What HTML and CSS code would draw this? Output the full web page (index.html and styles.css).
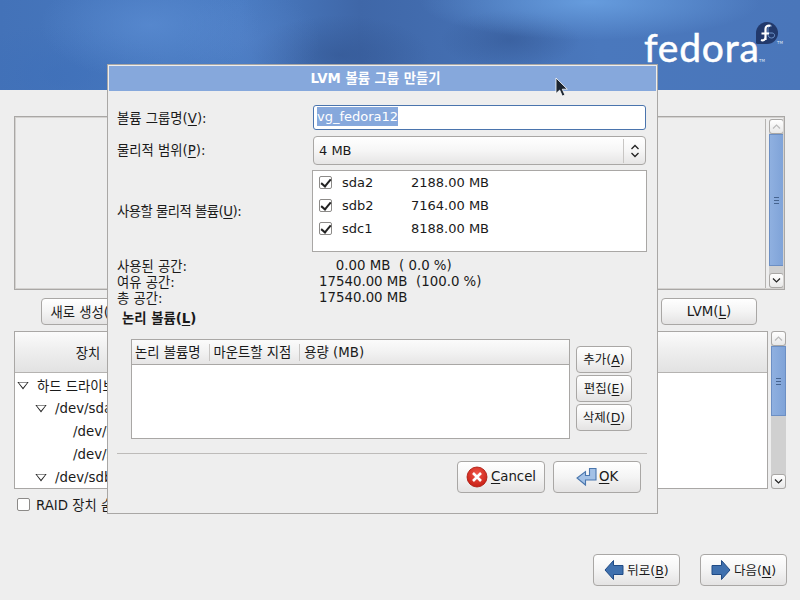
FILE: index.html
```html
<!DOCTYPE html>
<html lang="ko">
<head>
<meta charset="utf-8">
<title>LVM 볼륨 그룹 만들기</title>
<link rel="stylesheet" href="styles.css">
</head>
<body>
<div class="screen">
  <header class="banner">
    <div class="logo">
      <span class="logo-word">fedora</span><span class="tm tm-word">TM</span>
      <svg class="logo-mark" width="24" height="24" viewBox="0 0 24 24">
        <path d="M12 1a11 11 0 0 1 0 22H2.500A1.500 1.500 0 0 1 1 21.500V12A11 11 0 0 1 12 1z" fill="#22396b"/>
        <path d="M11 12H17c3.500 0 3.500 5-.5 5-2 0-3.500-1.500-3.500-3.500M13 12V7.500c0-2 2-3 4-2.500" fill="none" stroke="#6f95cc" stroke-width="1"/>
        <path d="M6.500 12.500H14M10.500 19V8c0-2.500 2-4 5-3.200M10.500 16c0 2.500-2 4-4.500 3" fill="none" stroke="#fff" stroke-width="2.200"/>
      </svg>
      <span class="tm tm-mark">TM</span>
    </div>
  </header>

  <main class="main">
    <div class="top-frame">
      <div class="top-list"></div>
      <div class="scrollbar">
        <div class="sb-btn"><svg width="9" height="5" viewBox="0 0 9 5"><path d="M1 4.500l3.500-3.500 3.500 3.500" fill="none" stroke="#bbb" stroke-width="1.200"/></svg></div>
        <div class="sb-thumb top-thumb"><span class="grip"></span></div>
        <div class="sb-track"></div>
        <div class="sb-btn"><svg width="9" height="5" viewBox="0 0 9 5"><path d="M1 .5l3.500 3.500 3.500-3.500" fill="none" stroke="#222" stroke-width="1.200"/></svg></div>
      </div>
    </div>

    <div class="actions">
      <button class="btn act-btn">새로 생성(W)</button>
      <button class="btn act-btn"><span>LVM(<u>L</u>)</span></button>
    </div>

    <div class="tree-row">
      <div class="tree">
        <div class="tree-head"><span class="tree-col">장치</span></div>
        <div class="tree-body">
          <div class="node lvl0"><i class="exp"></i>하드 드라이브</div>
          <div class="node lvl1"><i class="exp"></i>/dev/sda</div>
          <div class="node lvl2">/dev/sda1</div>
          <div class="node lvl2">/dev/sda2</div>
          <div class="node lvl1"><i class="exp"></i>/dev/sdb</div>
        </div>
      </div>
      <div class="scrollbar">
        <div class="sb-btn"><svg width="9" height="5" viewBox="0 0 9 5"><path d="M1 4.500l3.500-3.500 3.500 3.500" fill="none" stroke="#bbb" stroke-width="1.200"/></svg></div>
        <div class="sb-thumb tree-thumb"><span class="grip"></span></div>
        <div class="sb-track"></div>
        <div class="sb-btn"><svg width="9" height="5" viewBox="0 0 9 5"><path d="M1 .5l3.500 3.500 3.500-3.500" fill="none" stroke="#222" stroke-width="1.200"/></svg></div>
      </div>
    </div>

    <label class="raid"><i class="check"></i>RAID 장치 숨기기(A)</label>

    <div class="nav">
      <button class="btn nav-btn">
        <svg width="20" height="22" viewBox="0 0 20 22"><path d="M9.500 1.500L1 11l8.500 9.500V15.500H19v-9H9.500z" fill="#3f70ae" stroke="#1f4a85"/></svg>
        <span>뒤로(<u>B</u>)</span>
      </button>
      <button class="btn nav-btn">
        <svg width="20" height="22" viewBox="0 0 20 22"><path d="M10.500 1.500L19 11l-8.500 9.500V15.500H1v-9h9.500z" fill="#3f70ae" stroke="#1f4a85"/></svg>
        <span>다음(<u>N</u>)</span>
      </button>
    </div>
  </main>

  <section class="dialog">
    <div class="dlg-title">LVM 볼륨 그룹 만들기</div>
    <div class="dlg-body">
      <div class="form">
        <span class="lbl">볼륨 그룹명(<u>V</u>):</span>
        <div class="input"><span class="sel">vg_fedora12</span></div>
        <span class="lbl">물리적 범위(<u>P</u>):</span>
        <div class="combo">
          <span class="combo-val">4 MB</span>
          <span class="combo-arrows">
            <svg width="10" height="14" viewBox="0 0 10 14"><path d="M1.500 5L5 1.500 8.500 5M1.500 9L5 12.500 8.500 9" fill="none" stroke="#222" stroke-width="1.300"/></svg>
          </span>
        </div>
        <span class="lbl lbl-tight">사용할 물리적 볼륨(<u>U</u>):</span>
        <div class="pv-list">
          <div class="pv"><i class="check checked"></i><span class="pv-name">sda2</span><span>2188.00 MB</span></div>
          <div class="pv"><i class="check checked"></i><span class="pv-name">sdb2</span><span>7164.00 MB</span></div>
          <div class="pv"><i class="check checked"></i><span class="pv-name">sdc1</span><span>8188.00 MB</span></div>
        </div>
      </div>

      <div class="info">
        <span class="lbl">사용된 공간:</span><div><span class="num">0.00 MB</span><span class="pct-a">( 0.0 %)</span></div>
        <span class="lbl">여유 공간:</span><div><span class="num">17540.00 MB</span><span class="pct-b">(100.0 %)</span></div>
        <span class="lbl">총 공간:</span><div><span class="num">17540.00 MB</span></div>
      </div>

      <div class="lv-title">논리 볼륨(<u>L</u>)</div>

      <div class="lv-row">
        <div class="lv-table">
          <div class="lv-head">
            <span class="lv-col">논리 볼륨명</span>
            <span class="lv-col">마운트할 지점</span>
            <span class="lv-col">용량 (MB)</span>
          </div>
        </div>
        <div class="lv-btns">
          <button class="btn lv-btn"><span>추가(<u>A</u>)</span></button>
          <button class="btn lv-btn"><span>편집(<u>E</u>)</span></button>
          <button class="btn lv-btn"><span>삭제(<u>D</u>)</span></button>
        </div>
      </div>

      <div class="sep"></div>

      <div class="dlg-actions">
        <button class="btn dlg-btn">
          <svg width="22" height="22" viewBox="0 0 22 22"><defs><radialGradient id="red" cx=".5" cy=".35" r=".7"><stop offset="0" stop-color="#f0574a"/><stop offset="1" stop-color="#c41a10"/></radialGradient></defs><circle cx="11" cy="11" r="10" fill="url(#red)" stroke="#a81409" stroke-width=".8"/><path d="M7 7l8 8M15 7l-8 8" stroke="#fff" stroke-width="2.600"/></svg>
          <span><u>C</u>ancel</span>
        </button>
        <button class="btn dlg-btn ok-btn">
          <svg width="22" height="22" viewBox="0 0 22 22"><path d="M13.500 2.500h6.500v11.500H9.500V19L1 12 9.500 5.500v4h4z" fill="#a3c1e6" stroke="#4a76ad" stroke-width="1.100"/></svg>
          <span><u>O</u>K</span>
        </button>
      </div>
    </div>
  </section>

  <svg class="cursor" width="14" height="21" viewBox="0 0 14 21"><path d="M1 1v15.500l3.700-3.400 2.600 6 2.600-1.100-2.600-5.800h5z" fill="#1c2530" stroke="#fff" stroke-width=".8"/></svg>
</div>
</body>
</html>
```
FILE: styles.css
```css
* { box-sizing: border-box; }
html, body { margin: 0; padding: 0; }
body {
  font-family: "DejaVu Sans", "Noto Sans CJK KR", sans-serif;
  font-size: 13.33px;
  color: #1a1a1a;
}
.screen {
  position: relative;
  width: 800px;
  height: 600px;
  overflow: hidden;
  background: #eeeeee;
}
u { text-underline-offset: 2px; }

/* banner */
.banner {
  position: relative;
  height: 90px;
  background:
    radial-gradient(ellipse 110px 55px at 150px 25px, rgba(95,145,215,.6), transparent),
    radial-gradient(ellipse 70px 50px at 250px 40px, rgba(85,130,200,.45), transparent),
    radial-gradient(ellipse 170px 38px at 590px 2px, rgba(105,160,225,.9), transparent),
    radial-gradient(ellipse 110px 50px at 60px 75px, rgba(60,110,185,.5), transparent),
    radial-gradient(ellipse 90px 40px at 340px 55px, rgba(50,85,145,.6), transparent),
    radial-gradient(ellipse 70px 30px at 510px 40px, rgba(50,85,145,.55), transparent),
    linear-gradient(90deg, #4372b8 0%, #4a7cc3 30%, #3f67a8 45%, #4a78bd 75%, #4a76ba 100%);
}
.logo {
  position: absolute;
  left: 644px;
  top: 21px;
  width: 140px;
  height: 44px;
  color: #fff;
}
.logo-word {
  position: absolute;
  left: 0;
  top: 4px;
  font-family: "Lato", sans-serif;
  font-size: 39px;
  line-height: 44px;
  letter-spacing: 0.8px;
  -webkit-text-stroke: 0.5px #fff;
}
.logo-mark { position: absolute; left: 111px; top: 0; }
.tm { position: absolute; font-size: 4px; line-height: 5px; color: #dfe8f5; }
.tm-word { left: 115px; top: 37px; }
.tm-mark { left: 133px; top: 19px; }

/* main panel */
.main {
  display: flex;
  flex-direction: column;
  padding: 26px 0 0 14px;
}
.top-frame {
  display: flex;
  width: 771px;
  height: 174px;
  border: 1px solid #a9a7a5;
  outline: 1px solid #d4d2d0;
  outline-offset: -2px;
  padding: 2px 0 1px 2px;
}
.top-list { flex: 1; border-right: 1px solid #b5b3b1; margin-right: 3px; }
.scrollbar {
  display: flex;
  flex-direction: column;
  width: 15px;
  flex: none;
  border-radius: 3px;
  background: #d0d0d0;
}
.sb-btn {
  flex: none;
  height: 15px;
  display: flex;
  align-items: center;
  justify-content: center;
  background: linear-gradient(#ffffff, #e8e8e8);
  border: 1px solid #a9a7a5;
  border-radius: 3px;
}
.sb-thumb {
  display: flex;
  align-items: center;
  justify-content: center;
  background: linear-gradient(90deg, #8fb0e0, #7fa3d8);
  border: 1px solid #6c8fc4;
  flex: none;
}
.sb-track { flex: 1; }
.top-thumb { height: 132px; }
.tree-thumb { height: 70px; }
.grip {
  width: 5px;
  height: 7px;
  border-top: 1px solid #46648f;
  border-bottom: 1px solid #46648f;
  background: linear-gradient(#46648f, #46648f) center / 5px 1px no-repeat;
}

.btn {
  font: inherit;
  color: inherit;
  background: linear-gradient(#ffffff 0%, #f4f4f4 50%, #e4e3e3 100%);
  border: 1px solid #a9a7a5;
  border-radius: 4px;
  padding: 0 0 1px;
  display: flex;
  align-items: center;
  justify-content: center;
}

.actions {
  display: flex;
  justify-content: space-between;
  margin-top: 8px;
  padding: 0 43px 0 27px;
}
.act-btn { width: 96px; height: 27px; }

.tree-row { display: flex; margin-top: 6px; gap: 3px; height: 158px; }
.tree {
  width: 754px;
  border: 1px solid #a9a7a5;
  background: #fff;
}
.tree-head {
  height: 41px;
  display: flex;
  background: linear-gradient(#fbfbfb, #f0f0f0 40%, #e2e2e2);
  border-bottom: 1px solid #b5b3b1;
  align-items: center;
}
.tree-col { width: 146px; text-align: center; }
.tree-body { padding-top: 1px; }
.node { height: 23px; display: flex; align-items: center; white-space: nowrap; }
.lvl0 { padding-left: 2px; }
.lvl1 { padding-left: 20px; }
.lvl2 { padding-left: 58px; }
.exp {
  width: 12px;
  height: 8px;
  margin-right: 8px;
  background: linear-gradient(#222, #222);
  clip-path: polygon(0 0, 100% 0, 50% 100%, 0 0, 14% 12%, 50% 78%, 86% 12%, 14% 12%);
}

.check {
  display: block;
  flex: none;
  width: 13px;
  height: 13px;
  border: 1px solid #8c8a88;
  border-radius: 2px;
  background: #fff;
}
.checked { position: relative; }
.checked::after {
  content: "";
  position: absolute;
  left: 3px;
  top: 0;
  width: 4px;
  height: 8px;
  border-right: 2px solid #222;
  border-bottom: 2px solid #222;
  transform: rotate(40deg);
}
.raid {
  display: flex;
  align-items: center;
  gap: 6px;
  margin-top: 7px;
  padding-left: 3px;
  height: 17px;
}
.nav {
  display: flex;
  justify-content: flex-end;
  gap: 20px;
  margin-top: 41px;
  padding-right: 13px;
  font-size: 12.5px;
}
.nav-btn { width: 87px; height: 32px; gap: 3px; }

/* dialog */
.dialog {
  position: absolute;
  left: 107px;
  top: 64px;
  width: 551px;
  height: 450px;
  background: #eeeeee;
  border: 1px solid #a9a7a5;
  padding: 1px 1px 0 1px;
}
.dlg-title {
  height: 25px;
  background: #86a8dc;
  color: #fff;
  font-weight: bold;
  font-size: 13.33px;
  line-height: 25px;
  text-align: center;
  padding-right: 14px;
}
.dlg-body { padding: 14px 10px 0 8px; display: flex; flex-direction: column; }
.form {
  display: grid;
  grid-template-columns: 196px 1fr;
  grid-template-rows: 26px 29px 82px;
  row-gap: 5px;
  align-items: start;
}
.form .lbl { align-self: center; padding-bottom: 2px; }
.lbl-tight { letter-spacing: -0.5px; }
.input {
  height: 25px;
  background: #fff;
  border: 1px solid #4a74ad;
  border-radius: 3px;
  padding-left: 3px;
  line-height: 22px;
  font-size: 13px;
}
.sel { background: #86a8dc; color: #fff; padding: 2px 0; }
.combo {
  height: 29px;
  display: flex;
  align-items: center;
  justify-content: space-between;
  border: 1px solid #a9a7a5;
  border-radius: 4px;
  background: linear-gradient(#ffffff 0%, #f6f6f6 50%, #e6e5e5 100%);
  padding-left: 5px;
  font-size: 13px;
}
.combo-arrows {
  width: 22px;
  height: 24px;
  display: flex;
  align-items: center;
  justify-content: center;
  border-left: 1px solid #c8c6c4;
}
.pv-list {
  height: 82px;
  margin-left: -1px;
  margin-right: -1px;
  background: #fff;
  border: 1px solid #a9a7a5;
  padding: 0 0 0 6px;
  font-size: 13px;
}
.pv { height: 23px; display: flex; align-items: center; }
.pv-name { width: 69px; margin-left: 10px; }
.info {
  display: grid;
  grid-template-columns: 202px 1fr;
  grid-auto-rows: 16px;
  align-items: center;
  margin-top: 5px;
}
.info > div { white-space: nowrap; }
.info .lbl { white-space: nowrap; }
.num { display: inline-block; width: 88px; text-align: center; white-space: nowrap; }
.pct-a { margin-left: -8px; }
.pct-b { margin-left: 9px; }
.lv-title { font-weight: bold; margin: 6px 0 0 5px; height: 16px; line-height: 16px; }
.lv-row { display: flex; margin: 12px 0 0 14px; }
.lv-table {
  width: 439px;
  height: 100px;
  background: #fff;
  border: 1px solid #a9a7a5;
}
.lv-head {
  height: 25px;
  display: flex;
  align-items: center;
  background: linear-gradient(#fbfbfb, #f2f2f2 50%, #e6e5e5);
  border-bottom: 1px solid #a9a7a5;
}
.lv-col {
  padding: 0 8px 0 4px;
  height: 17px;
  line-height: 17px;
  border-right: 1px solid #c8c6c4;
  white-space: nowrap;
}
.lv-col:first-child { padding-left: 3px; }
.lv-col:last-child { border-right: 0; }
.lv-btns { display: flex; flex-direction: column; gap: 2px; margin: 7px 0 0 6px; font-size: 12.5px; }
.lv-btn { width: 56px; height: 27px; padding-bottom: 3px; }
.sep { height: 1px; background: #bdbbb9; margin-top: 14px; width: 530px; }
.dlg-actions { display: flex; justify-content: flex-end; gap: 8px; margin-top: 7px; padding-right: 5px; }
.dlg-btn { width: 88px; height: 32px; gap: 3px; }
.ok-btn { gap: 1px; }

.cursor { position: absolute; left: 555px; top: 77px; }
```
